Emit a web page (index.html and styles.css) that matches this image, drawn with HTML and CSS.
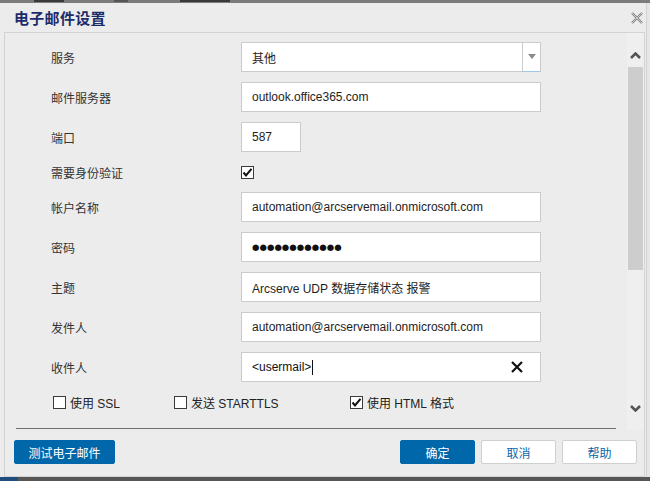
FILE: index.html
```html
<!DOCTYPE html>
<html lang="zh-CN">
<head>
<meta charset="utf-8">
<title>电子邮件设置</title>
<link rel="stylesheet" href="styles.css">
</head>
<body>
<div class="behind-top"><span class="bt bt1"></span><span class="bt bt2"></span><span class="bt bt3"></span></div>
<div class="dialog">
  <div class="titlebar">
    <span class="title">电子邮件设置</span>
    <svg class="close" width="12" height="12" viewBox="0 0 12 12">
      <path d="M1 1 L11 11 M11 1 L1 11" stroke="#858585" stroke-width="2.4" fill="none"/>
      <path d="M1 1 L11 11 M11 1 L1 11" stroke="#dcdcdc" stroke-width="0.8" fill="none"/>
    </svg>
  </div>
  <div class="panel">
    <div class="scroll">
      <div class="content">
        <div class="form">
          <div class="row">
            <span class="label">服务</span>
            <div class="input select">
              <span class="sel-text">其他</span>
              <span class="sel-arrow"><svg width="8" height="5" viewBox="0 0 8 5"><path d="M0 0 H8 L4 5 Z" fill="#8a8a8a"/></svg></span>
            </div>
          </div>
          <div class="row">
            <span class="label">邮件服务器</span>
            <div class="input">outlook.office365.com</div>
          </div>
          <div class="row">
            <span class="label">端口</span>
            <div class="input short">587</div>
          </div>
          <div class="row row-check">
            <span class="label">需要身份验证</span>
            <span class="cb checked"><svg width="11" height="11" viewBox="0 0 11 11"><path d="M1.5 5.5 L4 8.5 L9.5 1.8" stroke="#111" stroke-width="2" fill="none"/></svg></span>
          </div>
          <div class="row">
            <span class="label">帐户名称</span>
            <div class="input">automation@arcservemail.onmicrosoft.com</div>
          </div>
          <div class="row">
            <span class="label">密码</span>
            <div class="input"><span class="pw">●●●●●●●●●●●●</span></div>
          </div>
          <div class="row">
            <span class="label">主题</span>
            <div class="input">Arcserve UDP 数据存储状态 报警</div>
          </div>
          <div class="row">
            <span class="label">发件人</span>
            <div class="input">automation@arcservemail.onmicrosoft.com</div>
          </div>
          <div class="row">
            <span class="label">收件人</span>
            <div class="input recip">
              <span class="recip-text">&lt;usermail&gt;</span><span class="caret"></span>
              <svg class="clear" width="12" height="12" viewBox="0 0 12 12"><path d="M1 1 L11 11 M11 1 L1 11" stroke="#111" stroke-width="2.2" fill="none"/></svg>
            </div>
          </div>
          <div class="options">
            <label class="opt opt1"><span class="cb"></span><span>使用 SSL</span></label>
            <label class="opt opt2"><span class="cb"></span><span>发送 STARTTLS</span></label>
            <label class="opt opt3"><span class="cb checked"><svg width="11" height="11" viewBox="0 0 11 11"><path d="M1.5 5.5 L4 8.5 L9.5 1.8" stroke="#111" stroke-width="2" fill="none"/></svg></span><span>使用 HTML 格式</span></label>
          </div>
        </div>
        <div class="sep"></div>
      </div>
      <div class="scrollbar">
        <div class="sb-up"><svg width="11" height="7" viewBox="0 0 11 7"><path d="M1 6 L5.5 1.5 L10 6" stroke="#555" stroke-width="2.6" fill="none"/></svg></div>
        <div class="sb-thumb"></div>
        <div class="sb-space"></div>
        <div class="sb-down"><svg width="11" height="7" viewBox="0 0 11 7"><path d="M1 1 L5.5 5.5 L10 1" stroke="#555" stroke-width="2.6" fill="none"/></svg></div>
      </div>
    </div>
    <div class="buttons">
      <button class="btn primary test">测试电子邮件</button>
      <div class="spacer"></div>
      <button class="btn primary">确定</button>
      <button class="btn secondary">取消</button>
      <button class="btn secondary">帮助</button>
    </div>
  </div>
</div>
<div class="behind-bottom"><span class="bb-blue"></span></div>
</body>
</html>
```
FILE: styles.css
```css
html, body {
  margin: 0;
  padding: 0;
}
body {
  width: 650px;
  height: 481px;
  overflow: hidden;
  background: #e6e6e6;
  font-family: "Liberation Sans", "Noto Sans CJK SC", sans-serif;
  font-size: 12px;
  color: #333;
}
.behind-top {
  height: 3px;
  background: #7c7c7c;
  display: flex;
  align-items: flex-start;
}
.bt {
  height: 2px;
  background: #3a3a3a;
}
.bt1 { margin-left: 34px; width: 30px; }
.bt2 { margin-left: 50px; width: 14px; background: #555; }
.bt3 { margin-left: 52px; width: 50px; }

.dialog {
  width: 646px;
  height: 474px;
  background: #ececec;
  border-right: 1px solid #d2d2d2;
  display: flex;
  flex-direction: column;
}
.titlebar {
  height: 29px;
  display: flex;
  align-items: center;
  padding-left: 14px;
  padding-right: 3px;
  flex-shrink: 0;
}
.title {
  font-family: "Noto Sans CJK SC", sans-serif;
  font-size: 15px;
  font-weight: bold;
  color: #1c2c6a;
  letter-spacing: 0.3px;
  flex: 1;
}
.close {
  display: block;
}

.panel {
  margin-left: 4px;
  width: 641px;
  height: 445px;
  box-sizing: border-box;
  border: 1px solid #d3d3d3;
  display: flex;
  flex-direction: column;
}
.scroll {
  height: 397px;
  display: flex;
  flex-shrink: 0;
}
.content {
  flex: 1;
  display: flex;
  flex-direction: column;
}
.form {
  padding: 9px 0 0 46px;
}
.row {
  display: flex;
  align-items: center;
  height: 30px;
  margin-bottom: 10px;
}
.row-check {
  height: 20px;
}
.label {
  width: 190px;
  flex-shrink: 0;
  color: #333;
}
.input {
  width: 300px;
  height: 30px;
  box-sizing: border-box;
  border: 1px solid #cbcbcb;
  background: #fff;
  padding-left: 10px;
  display: flex;
  align-items: center;
  color: #1e1e1e;
  white-space: nowrap;
}
.input.short {
  width: 60px;
}
.select {
  padding-left: 0;
}
.sel-text {
  flex: 1;
  padding-left: 10px;
}
.sel-arrow {
  width: 17px;
  align-self: stretch;
  margin-bottom: -1px;
  border-left: 1px solid #cbcbcb;
  border-bottom: 1px solid #9cc6ee;
  display: flex;
  align-items: center;
  justify-content: center;
  padding-bottom: 1px;
}
.pw {
  font-family: "DejaVu Sans", sans-serif;
  font-size: 8.5px;
  letter-spacing: 0.05px;
  color: #111;
}
.recip {
  padding-right: 17px;
}
.recip-text {
  color: #111;
}
.caret {
  width: 1px;
  height: 15px;
  background: #111;
  margin-left: 1px;
}
.clear {
  margin-left: auto;
  display: block;
}

.cb {
  width: 13px;
  height: 13px;
  box-sizing: border-box;
  border: 1px solid #3a3a3a;
  background: #fff;
  display: inline-flex;
  align-items: center;
  justify-content: center;
  flex-shrink: 0;
}
.options {
  display: flex;
  align-items: center;
  height: 20px;
  padding-left: 2px;
}
.opt {
  display: flex;
  align-items: center;
  gap: 4px;
  color: #222;
}
.opt1 { width: 121px; }
.opt2 { width: 176px; }

.sep {
  margin: auto 11px 1px 11px;
  height: 1px;
  background: #6f6f6f;
}

.scrollbar {
  width: 17px;
  background: #efefef;
  display: flex;
  flex-direction: column;
  align-items: center;
}
.sb-up {
  height: 34px;
  box-sizing: border-box;
  padding-bottom: 8px;
  display: flex;
  align-items: flex-end;
}
.sb-thumb {
  width: 15px;
  height: 203px;
  background: #cdcdcd;
}
.sb-space {
  flex: 1;
}
.sb-down {
  height: 36px;
  box-sizing: border-box;
  padding-top: 11px;
}
.sb-up svg, .sb-down svg {
  display: block;
}

.buttons {
  flex: 1;
  display: flex;
  align-items: flex-start;
  padding: 10px 7px 0 9px;
  gap: 6px;
}
.spacer {
  flex: 1;
}
.btn {
  height: 24px;
  width: 75px;
  box-sizing: border-box;
  font-family: "Noto Sans CJK SC", sans-serif;
  font-size: 12px;
  border-radius: 2px;
  padding: 0;
  cursor: pointer;
}
.btn.primary {
  background: #0067ab;
  border: 1px solid #0067ab;
  color: #fff;
}
.btn.test {
  width: 101px;
}
.btn.secondary {
  background: #fff;
  border: 1px solid #cfcfcf;
  color: #0a66aa;
}

.behind-bottom {
  height: 4px;
  background: #565656;
}
.bb-blue {
  display: block;
  width: 18px;
  height: 4px;
  background: #1f4e7c;
}
```
